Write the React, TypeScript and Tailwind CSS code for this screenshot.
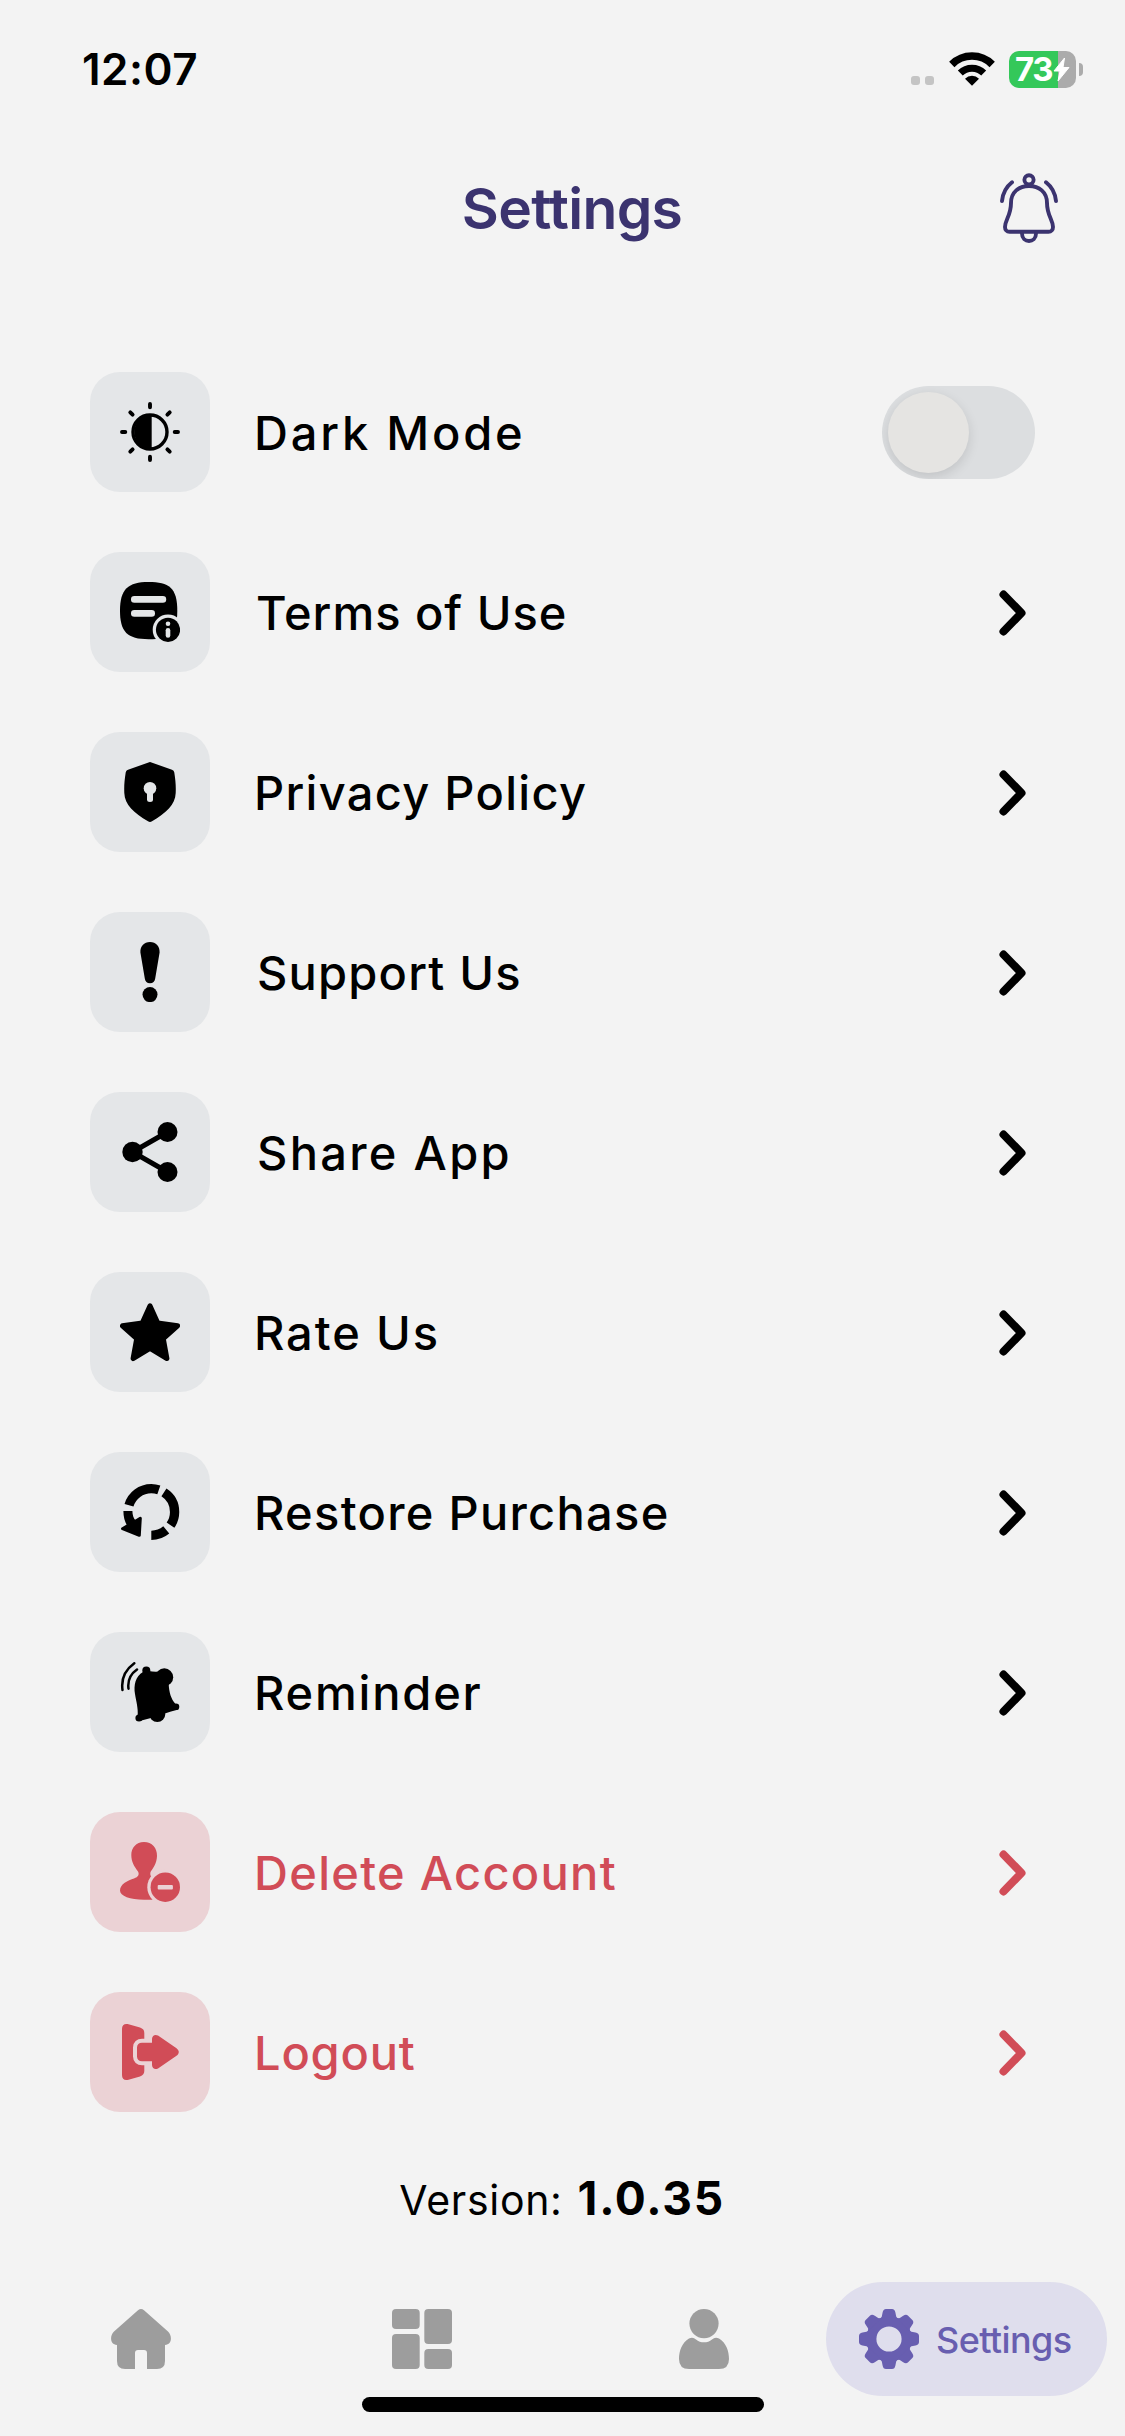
import { type ReactNode } from 'react';

const BellOutline = () => (
  <svg viewBox="0 0 58 70" className="w-[58px] h-[70px]" fill="none" stroke="#3b336f" strokeWidth="3.9" strokeLinecap="round" strokeLinejoin="round">
    <circle cx="29" cy="6.8" r="4.6" />
    <path d="M11 30C11 19 19 13 29 13s18 6 18 17c0 12.5 6 17 6 24 0 3-1.8 4.8-4.5 4.8h-39C6.8 58.8 5 57 5 54c0-7 6-11.5 6-24Z" />
    <path d="M22 60.5c0 10 14 10 14 0" />
    <path d="M12 9.3C6 14 2.8 20 2 28M46 9.3c6 4.7 9.2 10.7 10 18.7" />
  </svg>
);

const DarkModeIcon = () => (
  <svg viewBox="0 0 60 60" className="size-[60px]">
    <circle cx="30" cy="30" r="17" fill="none" stroke="currentColor" strokeWidth="3.4" />
    <path d="M31.7 12.5a17.5 17.5 0 1 0 0 35Z" fill="currentColor" />
    <g stroke="currentColor" strokeWidth="3.9" strokeLinecap="round">
      <path d="M30 2v3.3M30 54.7V58M2 30h3.3M54.7 30H58" />
      <path d="m10.300 10.300 2.300 2.300M47.400 47.400l2.300 2.300M49.700 10.300l-2.300 2.300M12.600 47.400l-2.300 2.300" />
    </g>
  </svg>
);

const TermsIcon = () => (
  <svg viewBox="0 0 60 60" className="size-[60px]">
    <path d="M28.600 0C49 0 57.300 6 57.300 28.600S50 57.300 28.600 57.300 0 50 0 28.600 8 0 28.600 0Z" fill="currentColor" />
    <rect x="11" y="14" width="35.2" height="6.7" rx="3.3" fill="#e4e6e8" />
    <rect x="11" y="28" width="24" height="6.7" rx="3.3" fill="#e4e6e8" />
    <circle cx="48" cy="47.8" r="15.3" fill="#e4e6e8" />
    <circle cx="48" cy="47.8" r="12.1" fill="currentColor" />
    <circle cx="48" cy="41.8" r="2.3" fill="#e4e6e8" />
    <rect x="45.7" y="46" width="4.6" height="9.8" rx="2.3" fill="#e4e6e8" />
  </svg>
);

const ShieldIcon = () => (
  <svg viewBox="0 0 60 60" className="size-[60px]">
    <path d="M28.500.5q1.500-.8 3 0L52 7.800q2 .7 2.300 2.700C55.500 18 56 24 55.700 31 55.300 43 46 51 32 59.300q-2 1.200-4 0C14 51 4.700 43 4.300 31 4 24 4.500 18 5.700 10.500 6 8.500 8 7.800 8 7.800Z" fill="currentColor" />
    <circle cx="30" cy="26.3" r="6.3" fill="#e4e6e8" />
    <path d="M27 30h6v7.500q0 2.500-3 2.500t-3-2.500Z" fill="#e4e6e8" />
  </svg>
);

const SupportIcon = () => (
  <svg viewBox="0 0 60 60" className="size-[60px]" fill="currentColor">
    <path d="M30 0c6 0 10 4.500 9.600 10.500l-4.400 26C34.800 39.500 33 41.200 30 41.200s-4.800-1.700-5.200-4.700l-4.400-26C20 4.500 24 0 30 0Z" />
    <circle cx="30" cy="52.6" r="7.5" />
  </svg>
);

const ShareIcon = () => (
  <svg viewBox="0 0 60 60" className="size-[60px]" fill="currentColor">
    <path d="M47.500 10 12.500 30l35 20" fill="none" stroke="currentColor" strokeWidth="5" />
    <circle cx="47.5" cy="10" r="10" />
    <circle cx="12.5" cy="30" r="10.2" />
    <circle cx="47.5" cy="50" r="10" />
  </svg>
);

const StarIcon = () => (
  <svg viewBox="0 0 60 60" className="size-[60px]" fill="currentColor" stroke="currentColor" strokeWidth="5" strokeLinejoin="round">
    <path d="m30 3.800 7.800 17.200 19.800 2.800-14.300 12.900 3.600 19.800L30 46.300 13.100 56.500l3.600-19.800L2.400 23.800 22.200 21Z" />
  </svg>
);

const RestoreIcon = () => (
  <svg viewBox="0 0 60 60" className="size-[60px]" fill="none" stroke="currentColor">
    <circle cx="31.3" cy="30" r="23.3" strokeWidth="9.3" pathLength="360" strokeDasharray="34.6 15.4 40 107 92 14 57 0" />
    <path d="M3.400 29h9c0 4 1.200 7.300 3.200 9.500L8 45C4.800 40.500 3.400 35 3.400 29Z" stroke="none" fill="currentColor" />
    <path d="m2.500 46.700 5-3 7.500-4.200 5.300-3.200-1 17Z" strokeWidth="3" strokeLinejoin="round" fill="currentColor" />
  </svg>
);

const ReminderIcon = () => (
  <svg viewBox="0 0 60 60" className="size-[60px]" fill="currentColor">
    <path d="M14.300 1.300C5 8 1 17 2.500 28M17 7.500C10.500 12 7.500 19 8.500 26.700" fill="none" stroke="currentColor" strokeWidth="2.5" strokeLinecap="round" />
    <path d="M23 10c-7.500 4.500-9.500 13-8 22 1.300 8 3.300 14 2.700 22l1.800 5L31 56l20-6.500 7.500-2-3-5.500C51 37 49 30 48.700 22L44 9c-6 1-11 1-15 0Z" />
    <circle cx="26.3" cy="8.5" r="4" />
    <circle cx="44.3" cy="15.2" r="8.9" />
    <circle cx="19" cy="56" r="3.6" />
    <circle cx="56" cy="44.8" r="3.3" />
    <circle cx="37.3" cy="52" r="8" />
  </svg>
);

const DeleteIcon = () => (
  <svg viewBox="0 0 60 60" className="size-[60px]">
    <path d="M24 0c8 0 13.300 6 13 14-.3 8-4 12-6.500 16-1 4 1.500 6 5.500 8v19.700H24C10 57.700 0 54 0 48.500 0 42 8 38.500 14 36.500c4.500-1.500 5.500-4.500 4-7C14 24 11.400 20 11.300 13 11.300 6 16 0 24 0Z" fill="currentColor" />
    <circle cx="45.3" cy="45.2" r="18" fill="#ebd2d5" />
    <circle cx="45.3" cy="45.2" r="14.7" fill="currentColor" />
    <rect x="37.7" y="43" width="15.2" height="4.4" rx="1" fill="#ebd2d5" />
  </svg>
);

const logoutArrow =
  'M22 20.700h10V17c.3-3.700 3-5 6-3.500l18.500 12.700c3 2.500 3 5.100 0 7.600L38 46.500c-3 1.500-5.700.2-6-3.500v-3.700H22c-3 0-5-1.800-5-4.800v-9c0-3 2-4.800 5-4.800Z';

const LogoutIcon = () => (
  <svg viewBox="0 0 60 60" className="size-[60px]">
    <path d="M8.500 2.300 20 5.600c3 1 4.300 2.700 4.300 5.400v38c0 2.700-1.300 4.400-4.300 5.400L8.500 57.700C4.500 58.700 2 57 2 53V7c0-4 2.500-5.700 6.500-4.700Z" fill="currentColor" />
    <path d={logoutArrow} fill="#ebd2d5" stroke="#ebd2d5" strokeWidth="8" />
    <path d={logoutArrow} fill="currentColor" />
  </svg>
);

const HomeIcon = () => (
  <svg viewBox="0 0 60 60" className="size-[60px]" fill="currentColor">
    <path d="M27 1.200q3-2.400 6 0L57 22.500C61.500 27 61 35.500 54 36v16q0 8-8 8H36V44q0-3-3-3h-6q-3 0-3 3v16H14q-8 0-8-8V36C-1 35.500-1.500 27 3 22.500Z" />
  </svg>
);

const GridIcon = () => (
  <svg viewBox="0 0 60 60" className="size-[60px]" fill="currentColor">
    <rect width="27.7" height="20" rx="4" />
    <rect y="25" width="27.7" height="35" rx="4" />
    <rect x="32.3" width="27.7" height="35" rx="4" />
    <rect x="32.3" y="40" width="27.7" height="20" rx="4" />
  </svg>
);

const PersonIcon = () => (
  <svg viewBox="0 0 60 60" className="size-[60px]" fill="currentColor">
    <circle cx="30" cy="14.6" r="14.6" />
    <path d="M15 29.500q4-1.800 7 1c4.500 3.800 11.500 3.800 16 0q3-2.800 7-1C52 33.500 55 42 55 50q0 10-10 10H15Q5 60 5 50c0-8 3-16.500 10-20.500Z" />
  </svg>
);

const GearIcon = () => (
  <svg viewBox="0 0 60 60" className="size-[60px]" fill="currentColor">
    <circle cx="30" cy="30" r="17.7" fill="none" stroke="currentColor" strokeWidth="10.2" />
    {[0, 45, 90, 135, 180, 225, 270, 315].map((deg) => (
      <path key={deg} transform={`rotate(${deg} 30 30)`} d="M23.600 3.500Q24.200 0 27 0h6q2.800 0 3.400 3.500l.8 4q.5 1.500 2.300 2.500h-19q1.800-1 2.300-2.500Z" />
    ))}
  </svg>
);

const Chevron = () => (
  <svg viewBox="0 0 28 46" className="w-[28px] h-[46px] mt-px mr-[8px]" fill="none" stroke="currentColor" strokeWidth="8" strokeLinecap="round" strokeLinejoin="round">
    <path d="m4.500 4.500 18 18.500L4.500 41.500" />
  </svg>
);

const Toggle = () => (
  <button
    role="switch"
    aria-checked="false"
    aria-label="Dark Mode"
    className="flex items-center w-[153px] h-[93px] rounded-full bg-[#dcdee0] pl-[6px] overflow-hidden"
  >
    <span className="size-[81px] rounded-full bg-[#e5e4e2] shadow-[0_4px_12px_rgba(0,0,0,0.12)]" />
  </button>
);

interface Item {
  label: string;
  icon: ReactNode;
  spacing: string;
  danger?: boolean;
  toggle?: boolean;
}

const items: Item[] = [
  { label: 'Dark Mode', icon: <DarkModeIcon />, spacing: 'ml-[44px] tracking-[2.8px]', toggle: true },
  { label: 'Terms of Use', icon: <TermsIcon />, spacing: 'ml-[46px] tracking-[1px]' },
  { label: 'Privacy Policy', icon: <ShieldIcon />, spacing: 'ml-[44px] tracking-[1.3px]' },
  { label: 'Support Us', icon: <SupportIcon />, spacing: 'ml-[47px] tracking-[1.2px]' },
  { label: 'Share App', icon: <ShareIcon />, spacing: 'ml-[47px] tracking-[2.3px]' },
  { label: 'Rate Us', icon: <StarIcon />, spacing: 'ml-[44px] tracking-[1.9px]' },
  { label: 'Restore Purchase', icon: <RestoreIcon />, spacing: 'ml-[44px] tracking-[1.3px]' },
  { label: 'Reminder', icon: <ReminderIcon />, spacing: 'ml-[44px] tracking-[1.8px]' },
  { label: 'Delete Account', icon: <DeleteIcon />, spacing: 'ml-[44px] tracking-[1.3px]', danger: true },
  { label: 'Logout', icon: <LogoutIcon />, spacing: 'ml-[44px] tracking-[0.8px]', danger: true },
];

function SettingsRow({ label, icon, spacing, danger, toggle }: Item) {
  return (
    <li className={`flex items-center h-[120px] ${danger ? 'text-[#d14c57]' : 'text-black'}`}>
      <div className={`flex items-center justify-center size-[120px] rounded-[30px] ${danger ? 'bg-[#ebd2d5]' : 'bg-[#e4e6e8]'}`}>
        {icon}
      </div>
      <span className={`flex-1 text-[47px] leading-none font-medium whitespace-nowrap ${spacing}`}>{label}</span>
      {toggle ? <Toggle /> : <Chevron />}
    </li>
  );
}

function StatusBar() {
  return (
    <div className="flex items-center justify-between h-[138px] pl-[82px] pr-[42px]">
      <span className="text-[44px] leading-none font-semibold tracking-[0.5px]">12:07</span>
      <div className="flex items-center">
        <div className="flex gap-[5px] mt-[22px] mr-[15px]">
          <span className="size-[9px] rounded-[3px] bg-[#c4c4c4]" />
          <span className="size-[9px] rounded-[3px] bg-[#c4c4c4]" />
        </div>
        <svg viewBox="0 0 46 34" className="w-[46px] h-[34px] mr-[14px]" fill="none" stroke="#000" strokeWidth="7.5">
          <path d="M2.800 12.500a28.500 28.500 0 0 1 40.400 0" />
          <path d="M11.300 21.100a16.700 16.700 0 0 1 23.400 0" strokeWidth="7" />
          <path d="M16 26.700a10 10 0 0 1 14 0L23 33.700Z" fill="#000" stroke="none" />
        </svg>
        <div className="flex items-center w-[67px] h-[37px] rounded-[10px] bg-gradient-to-r from-[#34c85a] from-[73%] to-[#ababab] to-[73%]">
          <span className="ml-[6px] w-[38px] shrink-0 text-[33px] leading-none font-bold text-white tracking-[-1.5px]">73</span>
          <svg viewBox="0 0 17 25" className="w-[17px] h-[25px] shrink-0" fill="#fff" stroke="#fff" strokeLinejoin="round">
            <path d="M11.500 1 1 14h6L5 24l11-13.500h-6Z" />
          </svg>
        </div>
        <span className="ml-[3px] w-[4px] h-[13px] rounded-r-full bg-[#ababab]" />
      </div>
    </div>
  );
}

export default function App() {
  return (
    <div className="flex flex-col w-[1125px] h-[2436px] overflow-hidden bg-[#f3f3f3] font-['Inter',sans-serif] text-black">
      <StatusBar />

      <header className="grid grid-cols-[1fr_auto_1fr] items-center h-[140px] pl-[86px] pr-[67px]">
        <span />
        <h1 className="text-[57px] leading-none font-semibold tracking-[-0.7px] text-[#3b336f]">Settings</h1>
        <button className="justify-self-end" aria-label="Notifications">
          <BellOutline />
        </button>
      </header>

      <ul className="flex flex-col gap-[60px] mt-[94px] pl-[90px] pr-[90px]">
        {items.map((item) => (
          <SettingsRow key={item.label} {...item} />
        ))}
      </ul>

      <p className="flex items-baseline justify-center h-[56px] mt-[58px] pr-px leading-[56px]">
        <span className="text-[41px] tracking-[0.7px]">Version:</span>
        <span className="ml-[15px] text-[46px] font-bold tracking-[1.7px]">1.0.35</span>
      </p>

      <nav className="flex items-center h-[114px] mt-[56px] text-[#9d9d9d]">
        <button className="flex justify-center w-[281px]" aria-label="Home"><HomeIcon /></button>
        <button className="flex justify-center w-[282px]" aria-label="Dashboard"><GridIcon /></button>
        <button className="flex justify-center w-[281px]" aria-label="Profile"><PersonIcon /></button>
        <button className="flex items-center w-[281px] h-[114px] -ml-[18px] pl-[33px] rounded-full bg-[#dfdeed] text-[#685eb0]">
          <GearIcon />
          <span className="ml-[17px] pt-[2px] text-[36px] leading-none font-medium tracking-[-0.6px]">Settings</span>
        </button>
      </nav>

      <div className="mx-auto mt-px w-[402px] h-[15px] shrink-0 rounded-full bg-black" />
    </div>
  );
}
